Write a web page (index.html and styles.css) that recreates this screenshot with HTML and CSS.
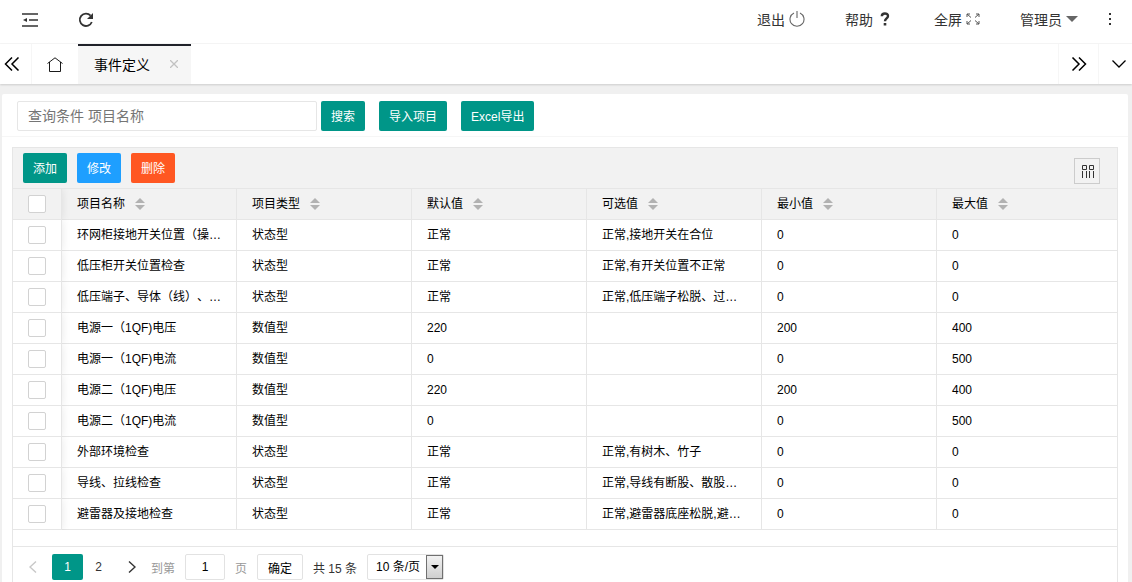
FILE: index.html
```html
<!DOCTYPE html>
<html lang="zh-CN">
<head>
    <meta charset="UTF-8">
    <meta name="viewport" content="width=device-width, initial-scale=1.0">
    <title>事件定义</title>
    <link rel="stylesheet" href="styles.css">
</head>
<body>
    <header class="topbar">
        <div class="topbar-left">
            <button type="button" class="icon-btn" aria-label="侧边伸缩">
                <svg width="16" height="14" viewBox="0 0 16 14"><path d="M0 1h16M7 7h9M0 13h16" fill="none" stroke="#333" stroke-width="1.6"/><path d="M5 5v4L1 7z" fill="#333"/></svg>
            </button>
            <button type="button" class="icon-btn" aria-label="刷新">
                <svg width="16" height="16" viewBox="0 0 16 16"><path d="M12.6 3.6A6.2 6.2 0 1 0 13.8 10" fill="none" stroke="#333" stroke-width="1.8"/><path d="M15 1v6H9z" fill="#333"/></svg>
            </button>
        </div>
        <nav class="topbar-right">
            <a href="#" class="top-link">退出
                <svg class="power" width="16" height="16" viewBox="0 0 16 16"><path d="M5 2A7 7 0 1 0 11 2M8 0v7" fill="none" stroke="#666" stroke-width="1.1"/></svg>
            </a>
            <a href="#" class="top-link">帮助
                <svg class="help" width="10" height="14" viewBox="0 0 10 14"><path d="M1.8 4.2C1.8 0.6 8 .6 8 4c0 2.4-3 2.4-3 5.2" fill="none" stroke="#333" stroke-width="2.4"/><path d="M3.7 11h2.6v2.5H3.7z" fill="#333"/></svg>
            </a>
            <a href="#" class="top-link">全屏
                <svg class="full" width="14" height="12" viewBox="0 0 14 12"><path d="M1 4V1h3M10 1h3v3M1 8v3h3M10 11h3V8M1 1l4 3.5M13 1L9 4.5M1 11l4-3.5M13 11L9 7.5" fill="none" stroke="#555"/></svg>
            </a>
            <a href="#" class="top-link">管理员
                <svg class="caret" width="12" height="6" viewBox="0 0 12 6"><path d="M0 0h12L6 6z" fill="#666"/></svg>
            </a>
            <button type="button" class="more-btn" aria-label="更多">
                <svg width="4" height="14" viewBox="0 0 4 14"><path d="M1 1h2v2H1zM1 6h2v2H1zM1 11h2v2H1z" fill="#333"/></svg>
            </button>
        </nav>
    </header>

    <div class="tabs">
        <button type="button" class="tab-ctrl tab-prev" aria-label="向左">
            <svg width="16" height="14" viewBox="0 0 16 14"><path d="M8 .5L1.5 7 8 13.5M14.5 .5L8 7l6.5 6.5" fill="none" stroke="#000" stroke-width="1.5"/></svg>
        </button>
        <a href="#" class="tab-home" aria-label="首页">
            <svg width="16" height="15" viewBox="0 0 16 15"><path d="M.5 6.5L8 .8l7.5 5.7M2.5 5v9.5h11V5" fill="none" stroke="#000" stroke-width="0.9"/></svg>
        </a>
        <div class="tab active">
            <a href="#">事件定义</a>
            <button type="button" class="tab-close" aria-label="关闭">
                <svg width="8" height="8" viewBox="0 0 8 8"><path d="M0 0l8 8M8 0L0 8" fill="none" stroke="#c2c2c2" stroke-width="1.3"/></svg>
            </button>
        </div>
        <button type="button" class="tab-ctrl tab-next" aria-label="向右">
            <svg width="16" height="14" viewBox="0 0 16 14"><path d="M1.5 .5L8 7l-6.500 6.500M8 .5L14.500 7 8 13.500" fill="none" stroke="#000" stroke-width="1.5"/></svg>
        </button>
        <button type="button" class="tab-ctrl tab-down" aria-label="标签菜单">
            <svg width="14" height="8" viewBox="0 0 14 8"><path d="M.5 .5L7 7l6.5-6.5" fill="none" stroke="#000" stroke-width="1.3"/></svg>
        </button>
    </div>

    <main class="card">
        <form class="search">
            <input type="text" class="search-input" placeholder="查询条件 项目名称" aria-label="查询条件 项目名称">
            <button type="button" class="btn btn-search">搜索</button>
            <button type="button" class="btn">导入项目</button>
            <button type="button" class="btn">Excel导出</button>
        </form>

        <div class="table-view">
            <div class="toolbar">
                <button type="button" class="btn">添加</button>
                <button type="button" class="btn btn-blue">修改</button>
                <button type="button" class="btn btn-red">删除</button>
                <button type="button" class="cols-btn" aria-label="筛选列">
                    <svg width="14" height="14" viewBox="0 0 14 14"><path d="M1.5 1.5h4v4h-4zM8.500 1.500h4v4h-4zM1.500 7v7M5.500 7v7M8.500 7v7M12.500 7v7" fill="none" stroke="#333"/></svg>
                </button>
            </div>

            <table class="grid">
                <colgroup>
                    <col class="col-check">
                    <col class="col-data">
                    <col class="col-data">
                    <col class="col-data">
                    <col class="col-data">
                    <col class="col-data">
                    <col>
                </colgroup>
                <thead>
                    <tr>
                        <th class="check"><input type="checkbox" aria-label="全选"></th>
                        <th>项目名称<span class="sort"></span></th>
                        <th>项目类型<span class="sort"></span></th>
                        <th>默认值<span class="sort"></span></th>
                        <th>可选值<span class="sort"></span></th>
                        <th>最小值<span class="sort"></span></th>
                        <th>最大值<span class="sort"></span></th>
                    </tr>
                </thead>
                <tbody id="rows"></tbody>
            </table>

            <div class="pager">
                <button type="button" class="page-arrow" aria-label="上一页" disabled>
                    <svg width="8" height="12" viewBox="0 0 8 12"><path d="M7 .5L1 6l6 5.500" fill="none" stroke="#c8c8c8" stroke-width="1.4"/></svg>
                </button>
                <span class="page-num current">1</span>
                <a href="#" class="page-num">2</a>
                <button type="button" class="page-arrow page-next" aria-label="下一页">
                    <svg width="8" height="12" viewBox="0 0 8 12"><path d="M1 .5L7 6l-6 5.500" fill="none" stroke="#333" stroke-width="1.4"/></svg>
                </button>
                <label class="page-skip">到第 <input type="text" value="1"> 页</label>
                <button type="button" class="page-ok">确定</button>
                <span class="page-count">共 15 条</span>
                <div class="page-limit">
                    <select aria-label="每页条数">
                        <option>10 条/页</option>
                        <option>20 条/页</option>
                        <option>30 条/页</option>
                    </select>
                    <span class="limit-arrow"></span>
                </div>
            </div>
        </div>
    </main>

    <script>
        const data = [
            ['环网柜接地开关位置（操…', '状态型', '正常', '正常,接地开关在合位', '0', '0'],
            ['低压柜开关位置检查', '状态型', '正常', '正常,有开关位置不正常', '0', '0'],
            ['低压端子、导体（线）、…', '状态型', '正常', '正常,低压端子松脱、过…', '0', '0'],
            ['电源一（1QF)电压', '数值型', '220', '', '200', '400'],
            ['电源一（1QF)电流', '数值型', '0', '', '0', '500'],
            ['电源二（1QF)电压', '数值型', '220', '', '200', '400'],
            ['电源二（1QF)电流', '数值型', '0', '', '0', '500'],
            ['外部环境检查', '状态型', '正常', '正常,有树木、竹子', '0', '0'],
            ['导线、拉线检查', '状态型', '正常', '正常,导线有断股、散股…', '0', '0'],
            ['避雷器及接地检查', '状态型', '正常', '正常,避雷器底座松脱,避…', '0', '0']
        ];

        // Fill the table body
        document.getElementById('rows').innerHTML = data.map(row => `
            <tr>
                <td class="check"><input type="checkbox" aria-label="${row[0]}"></td>
                ${row.map(cell => `<td>${cell}</td>`).join('')}
            </tr>
        `).join('');
    </script>
</body>
</html>
```
FILE: styles.css
```css
* {
    box-sizing: border-box;
}

body {
    margin: 0;
    min-height: 100vh;
    display: flex;
    flex-direction: column;
    background-color: #f0f0f0;
    color: #000;
    font-family: "Liberation Sans", Arial, "Noto Sans CJK SC", sans-serif;
    font-size: 12px;
    text-spacing-trim: space-all;
}

button, input, select {
    font-family: inherit;
    font-size: 12px;
    margin: 0;
}

button {
    padding: 0;
    border: none;
    background: none;
    cursor: pointer;
}

a {
    color: inherit;
    text-decoration: none;
}

svg {
    display: block;
    flex: none;
}

/* Top bar */
.topbar {
    display: flex;
    justify-content: space-between;
    height: 44px;
    padding-bottom: 4px;
    background-color: #fff;
    border-bottom: 1px solid #f6f6f6;
}

.topbar-left {
    display: flex;
    padding-left: 2px;
}

.icon-btn {
    display: flex;
    align-items: center;
    justify-content: center;
    width: 56px;
}

.topbar-right {
    display: flex;
    align-items: center;
    gap: 40px;
    padding: 0 20px 1px 0;
    color: #333;
    font-size: 14px;
}

.top-link {
    display: flex;
    align-items: center;
    gap: 4px;
}

.top-link .help {
    margin: 0 4px 0 3px;
}

.more-btn {
    margin-left: -10px;
}

/* Tabs */
.tabs {
    display: flex;
    height: 40px;
    background-color: #fff;
    box-shadow: 0 1px 2px rgba(0, 0, 0, 0.15);
}

.tab-ctrl, .tab-home {
    display: flex;
    align-items: center;
    justify-content: center;
    flex: none;
    width: 40px;
}

.tab-prev {
    width: 32px;
    padding-right: 8px;
    border-right: 1px solid #f6f6f6;
}

.tab-home {
    width: 46px;
}

.tab {
    display: flex;
    align-items: center;
    justify-content: space-between;
    width: 113px;
    padding: 0 11px 3px 16px;
    font-size: 14px;
}

.tab.active {
    background-color: #f6f6f6;
    border-top: 2px solid #20222a;
}

.tab-close {
    padding: 2px;
}

.tab-next {
    margin-left: auto;
    border-left: 1px solid #f6f6f6;
}

.tab-down {
    width: 34px;
    padding-left: 6px;
    border-left: 1px solid #f6f6f6;
}

/* Card */
.card {
    flex: 1;
    display: flex;
    flex-direction: column;
    margin: 10px 4px 0 2px;
    background-color: #fff;
    border-radius: 2px 2px 0 0;
}

.search {
    display: flex;
    gap: 14px;
    padding: 7px 15px 5px;
    border-bottom: 1px solid #f6f6f6;
}

.search-input {
    width: 300px;
    height: 30px;
    padding: 0 10px;
    border: 1px solid #e6e6e6;
    border-radius: 2px;
    font-size: 14px;
}

.search-input::placeholder {
    color: #757575;
}

.btn {
    height: 30px;
    padding: 0 10px 2px;
    background-color: #009688;
    color: #fff;
    border-radius: 2px;
    white-space: nowrap;
}

.btn-search {
    margin-left: -10px;
}

.btn-blue {
    background-color: #1e9fff;
}

.btn-red {
    background-color: #ff5722;
}

/* Table */
.table-view {
    flex: 1;
    margin: 10px 10px 0;
    border: 1px solid #e6e6e6;
    border-bottom: none;
}

.toolbar {
    display: flex;
    gap: 10px;
    height: 41px;
    padding: 5px 17px 5px 10px;
    background-color: #f2f2f2;
    border-bottom: 1px solid #e6e6e6;
}

.cols-btn {
    display: flex;
    align-items: center;
    justify-content: center;
    width: 26px;
    height: 26px;
    margin: 5px 0 0 auto;
    padding-left: 2px;
    border: 1px solid #ccc;
}

.grid {
    width: 100%;
    table-layout: fixed;
    border-collapse: separate;
    border-spacing: 0;
}

.col-check {
    width: 49px;
}

.col-data {
    width: 175px;
}

.grid th, .grid td {
    height: 31px;
    padding: 0 10px 0 15px;
    border-right: 1px solid #e6e6e6;
    border-bottom: 1px solid #e6e6e6;
    font-weight: normal;
    line-height: 28px;
    text-align: left;
    white-space: nowrap;
    overflow: hidden;
    text-overflow: ellipsis;
}

.grid th {
    background-color: #f2f2f2;
}

.grid th:last-child, .grid td:last-child {
    border-right: none;
}

.grid .check {
    padding: 0;
    overflow: visible;
    box-shadow: 1px 0 8px rgba(0, 0, 0, 0.08);
    clip-path: inset(0 -10px 0 0);
}

.check input {
    display: block;
    appearance: none;
    width: 18px;
    height: 18px;
    margin: 0 auto;
    background-color: #fff;
    border: 1px solid #d2d2d2;
    border-radius: 2px;
}

.check input:checked {
    background-color: #009688;
}

.sort {
    display: inline-flex;
    flex-direction: column;
    gap: 2px;
    margin: 0 0 2px 10px;
    vertical-align: middle;
}

.sort::before, .sort::after {
    content: "";
    border: 5px solid transparent;
}

.sort::before {
    border-top: none;
    border-bottom-color: #b2b2b2;
}

.sort::after {
    border-bottom: none;
    border-top-color: #b2b2b2;
}

/* Pagination */
.pager {
    display: flex;
    align-items: center;
    margin-top: 16px;
    padding: 7px 7px 1px;
    border-top: 1px solid #e6e6e6;
    color: #333;
}

.page-arrow {
    display: flex;
    align-items: center;
    justify-content: center;
    width: 26px;
    height: 26px;
    margin-right: 6px;
}

.page-num {
    width: 31px;
    line-height: 26px;
    text-align: center;
}

.page-num.current {
    background-color: #009688;
    color: #fff;
    border-radius: 2px;
}

.page-next {
    margin: 0 6px 0 5px;
}

.page-skip {
    display: flex;
    align-items: center;
    gap: 10px;
    color: #999;
}

.page-skip input {
    width: 40px;
    height: 26px;
    padding: 0;
    border: 1px solid #e2e2e2;
    border-radius: 2px;
    text-align: center;
}

.page-ok {
    width: 46px;
    height: 26px;
    margin: 0 10px;
    border: 1px solid #e2e2e2;
    border-radius: 2px;
}

.page-limit {
    position: relative;
    margin-left: 10px;
}

.page-limit select {
    display: block;
    appearance: none;
    width: 77px;
    height: 26px;
    padding: 0 8px;
    background-color: #fff;
    border: 1px solid #e2e2e2;
    border-radius: 2px;
    color: #000;
}

.limit-arrow {
    position: absolute;
    top: 1px;
    right: 1px;
    display: flex;
    align-items: center;
    justify-content: center;
    width: 17px;
    height: 24px;
    background-image: linear-gradient(#f2f2f2, #cfcfcf);
    border: 1px solid #707070;
    pointer-events: none;
}

.limit-arrow::before {
    content: "";
    border: 4px solid transparent;
    border-top-color: #000;
    border-bottom: none;
}
```
